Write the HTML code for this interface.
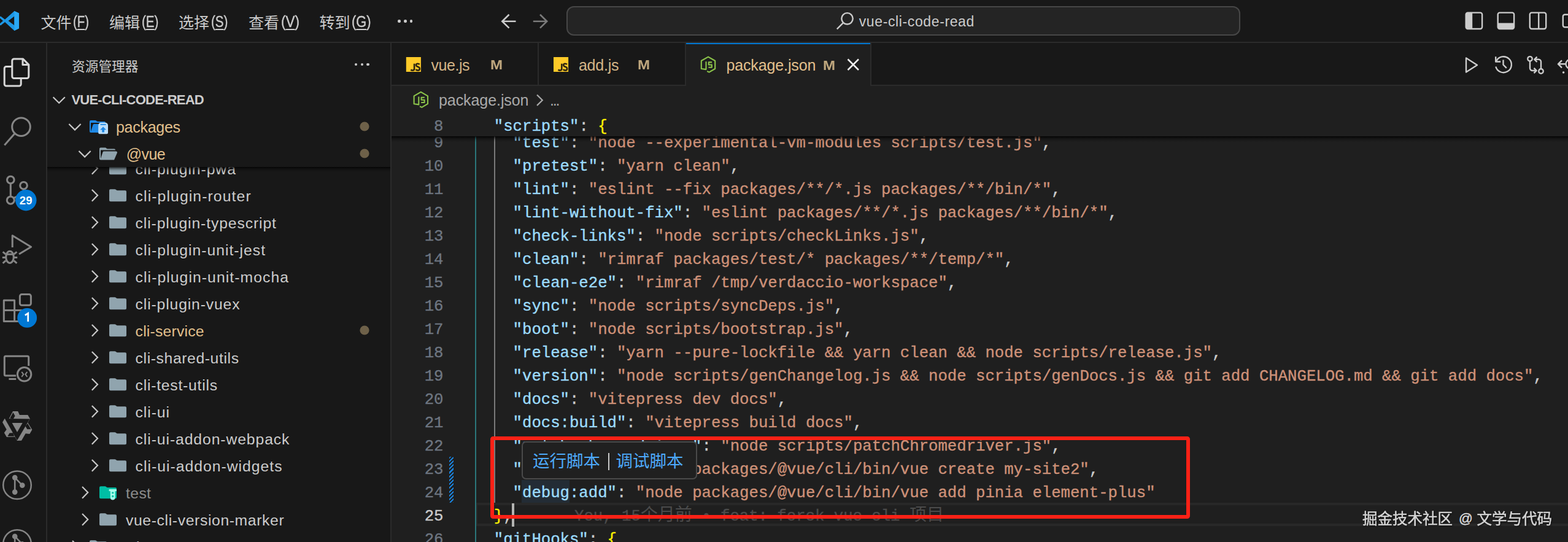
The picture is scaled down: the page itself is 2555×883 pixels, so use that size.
<!DOCTYPE html>
<html><head><meta charset="utf-8"><title>vue-cli-code-read</title>
<style>
html,body{margin:0;padding:0;background:#181818;}
body{width:2555px;height:883px;position:relative;overflow:hidden;font-family:"Liberation Sans",sans-serif;}
.r{position:absolute;}
.t{position:absolute;white-space:pre;font-family:"Liberation Sans",sans-serif;}
.m{position:absolute;white-space:pre;font-family:"Liberation Mono",monospace;-webkit-text-stroke:0.35px currentColor;}
svg{position:absolute;left:0;top:0;overflow:visible;}
.k{color:#9cdcfe}.s{color:#ce9178}.p{color:#cccccc}.y{color:#fff200}
</style></head><body>

<div class="r" style="left:0px;top:0px;width:2555px;height:68px;background:#181818;"></div>
<div class="r" style="left:0px;top:68px;width:2555px;height:2px;background:#2b2b2b;"></div>
<div class="r" style="left:0px;top:70px;width:75px;height:813px;background:#181818;"></div>
<div class="r" style="left:75px;top:70px;width:2px;height:813px;background:#2b2b2b;"></div>
<div class="r" style="left:77px;top:70px;width:559px;height:813px;background:#181818;"></div>
<div class="r" style="left:636px;top:70px;width:2px;height:813px;background:#2b2b2b;"></div>
<div class="r" style="left:638px;top:70px;width:1917px;height:68px;background:#181818;"></div>
<div class="r" style="left:638px;top:138px;width:1917px;height:2px;background:#2b2b2b;"></div>
<div class="r" style="left:638px;top:140px;width:1917px;height:743px;background:#1f1f1f;"></div>
<div class="r" style="left:876px;top:70px;width:2px;height:69px;background:#2b2b2b;"></div>
<div class="r" style="left:1116px;top:70px;width:2px;height:69px;background:#2b2b2b;"></div>
<div class="r" style="left:1118px;top:70px;width:300px;height:70px;background:#1f1f1f;"></div>
<div class="r" style="left:1118px;top:70px;width:300px;height:2px;background:#0078d4;"></div>
<div class="r" style="left:1418px;top:70px;width:2px;height:69px;background:#2b2b2b;"></div>
<div class="r" style="left:774px;top:819px;width:1791px;height:38px;background:transparent;box-sizing:border-box;border:4px solid #282828;"></div>
<div class="r" style="left:850px;top:782px;width:78px;height:37px;background:#232c35;"></div>
<div class="r" style="left:774.3px;top:221px;width:2px;height:662px;background:#2b777b;"></div>
<div class="r" style="left:804.6px;top:221px;width:2px;height:598px;background:#7a7a7a;"></div>
<div class="m" style="left:707.1px;top:214.87px;font-size:25.662px;line-height:38px;color:#6e7681;transform:scaleY(1.0);transform-origin:0 25.83px;">9</div>
<div class="m" style="left:774px;top:214.87px;font-size:25.662px;line-height:38px;color:#cccccc;transform:scaleY(1.0);transform-origin:0 25.83px;">    <span class="k">"test"</span><span class="p">: </span><span class="s">"node --experimental-vm-modules scripts/test.js"</span><span class="p">,</span></div>
<div class="m" style="left:691.7px;top:252.87px;font-size:25.662px;line-height:38px;color:#6e7681;transform:scaleY(1.0);transform-origin:0 25.83px;">10</div>
<div class="m" style="left:774px;top:252.87px;font-size:25.662px;line-height:38px;color:#cccccc;transform:scaleY(1.0);transform-origin:0 25.83px;">    <span class="k">"pretest"</span><span class="p">: </span><span class="s">"yarn clean"</span><span class="p">,</span></div>
<div class="m" style="left:691.7px;top:290.87px;font-size:25.662px;line-height:38px;color:#6e7681;transform:scaleY(1.0);transform-origin:0 25.83px;">11</div>
<div class="m" style="left:774px;top:290.87px;font-size:25.662px;line-height:38px;color:#cccccc;transform:scaleY(1.0);transform-origin:0 25.83px;">    <span class="k">"lint"</span><span class="p">: </span><span class="s">"eslint --fix packages/**/*.js packages/**/bin/*"</span><span class="p">,</span></div>
<div class="m" style="left:691.7px;top:328.87px;font-size:25.662px;line-height:38px;color:#6e7681;transform:scaleY(1.0);transform-origin:0 25.83px;">12</div>
<div class="m" style="left:774px;top:328.87px;font-size:25.662px;line-height:38px;color:#cccccc;transform:scaleY(1.0);transform-origin:0 25.83px;">    <span class="k">"lint-without-fix"</span><span class="p">: </span><span class="s">"eslint packages/**/*.js packages/**/bin/*"</span><span class="p">,</span></div>
<div class="m" style="left:691.7px;top:366.87px;font-size:25.662px;line-height:38px;color:#6e7681;transform:scaleY(1.0);transform-origin:0 25.83px;">13</div>
<div class="m" style="left:774px;top:366.87px;font-size:25.662px;line-height:38px;color:#cccccc;transform:scaleY(1.0);transform-origin:0 25.83px;">    <span class="k">"check-links"</span><span class="p">: </span><span class="s">"node scripts/checkLinks.js"</span><span class="p">,</span></div>
<div class="m" style="left:691.7px;top:404.87px;font-size:25.662px;line-height:38px;color:#6e7681;transform:scaleY(1.0);transform-origin:0 25.83px;">14</div>
<div class="m" style="left:774px;top:404.87px;font-size:25.662px;line-height:38px;color:#cccccc;transform:scaleY(1.0);transform-origin:0 25.83px;">    <span class="k">"clean"</span><span class="p">: </span><span class="s">"rimraf packages/test/* packages/**/temp/*"</span><span class="p">,</span></div>
<div class="m" style="left:691.7px;top:442.87px;font-size:25.662px;line-height:38px;color:#6e7681;transform:scaleY(1.0);transform-origin:0 25.83px;">15</div>
<div class="m" style="left:774px;top:442.87px;font-size:25.662px;line-height:38px;color:#cccccc;transform:scaleY(1.0);transform-origin:0 25.83px;">    <span class="k">"clean-e2e"</span><span class="p">: </span><span class="s">"rimraf /tmp/verdaccio-workspace"</span><span class="p">,</span></div>
<div class="m" style="left:691.7px;top:480.87px;font-size:25.662px;line-height:38px;color:#6e7681;transform:scaleY(1.0);transform-origin:0 25.83px;">16</div>
<div class="m" style="left:774px;top:480.87px;font-size:25.662px;line-height:38px;color:#cccccc;transform:scaleY(1.0);transform-origin:0 25.83px;">    <span class="k">"sync"</span><span class="p">: </span><span class="s">"node scripts/syncDeps.js"</span><span class="p">,</span></div>
<div class="m" style="left:691.7px;top:518.87px;font-size:25.662px;line-height:38px;color:#6e7681;transform:scaleY(1.0);transform-origin:0 25.83px;">17</div>
<div class="m" style="left:774px;top:518.87px;font-size:25.662px;line-height:38px;color:#cccccc;transform:scaleY(1.0);transform-origin:0 25.83px;">    <span class="k">"boot"</span><span class="p">: </span><span class="s">"node scripts/bootstrap.js"</span><span class="p">,</span></div>
<div class="m" style="left:691.7px;top:556.87px;font-size:25.662px;line-height:38px;color:#6e7681;transform:scaleY(1.0);transform-origin:0 25.83px;">18</div>
<div class="m" style="left:774px;top:556.87px;font-size:25.662px;line-height:38px;color:#cccccc;transform:scaleY(1.0);transform-origin:0 25.83px;">    <span class="k">"release"</span><span class="p">: </span><span class="s">"yarn --pure-lockfile &amp;&amp; yarn clean &amp;&amp; node scripts/release.js"</span><span class="p">,</span></div>
<div class="m" style="left:691.7px;top:594.87px;font-size:25.662px;line-height:38px;color:#6e7681;transform:scaleY(1.0);transform-origin:0 25.83px;">19</div>
<div class="m" style="left:774px;top:594.87px;font-size:25.662px;line-height:38px;color:#cccccc;transform:scaleY(1.0);transform-origin:0 25.83px;">    <span class="k">"version"</span><span class="p">: </span><span class="s">"node scripts/genChangelog.js &amp;&amp; node scripts/genDocs.js &amp;&amp; git add CHANGELOG.md &amp;&amp; git add docs"</span><span class="p">,</span></div>
<div class="m" style="left:691.7px;top:632.87px;font-size:25.662px;line-height:38px;color:#6e7681;transform:scaleY(1.0);transform-origin:0 25.83px;">20</div>
<div class="m" style="left:774px;top:632.87px;font-size:25.662px;line-height:38px;color:#cccccc;transform:scaleY(1.0);transform-origin:0 25.83px;">    <span class="k">"docs"</span><span class="p">: </span><span class="s">"vitepress dev docs"</span><span class="p">,</span></div>
<div class="m" style="left:691.7px;top:670.87px;font-size:25.662px;line-height:38px;color:#6e7681;transform:scaleY(1.0);transform-origin:0 25.83px;">21</div>
<div class="m" style="left:774px;top:670.87px;font-size:25.662px;line-height:38px;color:#cccccc;transform:scaleY(1.0);transform-origin:0 25.83px;">    <span class="k">"docs:build"</span><span class="p">: </span><span class="s">"vitepress build docs"</span><span class="p">,</span></div>
<div class="m" style="left:691.7px;top:708.87px;font-size:25.662px;line-height:38px;color:#6e7681;transform:scaleY(1.0);transform-origin:0 25.83px;">22</div>
<div class="m" style="left:774px;top:708.87px;font-size:25.662px;line-height:38px;color:#cccccc;transform:scaleY(1.0);transform-origin:0 25.83px;">    <span class="k">"patch-chromedriver"</span><span class="p">: </span><span class="s">"node scripts/patchChromedriver.js"</span><span class="p">,</span></div>
<div class="m" style="left:691.7px;top:746.87px;font-size:25.662px;line-height:38px;color:#6e7681;transform:scaleY(1.0);transform-origin:0 25.83px;">23</div>
<div class="m" style="left:774px;top:746.87px;font-size:25.662px;line-height:38px;color:#cccccc;transform:scaleY(1.0);transform-origin:0 25.83px;">    <span class="k">"debug:new"</span><span class="p">: </span><span class="s">"node packages/@vue/cli/bin/vue create my-site2"</span><span class="p">,</span></div>
<div class="m" style="left:691.7px;top:784.87px;font-size:25.662px;line-height:38px;color:#6e7681;transform:scaleY(1.0);transform-origin:0 25.83px;">24</div>
<div class="m" style="left:774px;top:784.87px;font-size:25.662px;line-height:38px;color:#cccccc;transform:scaleY(1.0);transform-origin:0 25.83px;">    <span class="k">"debug:add"</span><span class="p">: </span><span class="s">"node packages/@vue/cli/bin/vue add pinia element-plus"</span></div>
<div class="m" style="left:691.7px;top:822.87px;font-size:25.662px;line-height:38px;color:#cccccc;transform:scaleY(1.0);transform-origin:0 25.83px;">25</div>
<div class="m" style="left:774px;top:822.87px;font-size:25.662px;line-height:38px;color:#cccccc;transform:scaleY(1.0);transform-origin:0 25.83px;">  <span class="y">}</span><span class="p">,</span></div>
<div class="m" style="left:691.7px;top:860.87px;font-size:25.662px;line-height:38px;color:#6e7681;transform:scaleY(1.0);transform-origin:0 25.83px;">26</div>
<div class="m" style="left:774px;top:860.87px;font-size:25.662px;line-height:38px;color:#cccccc;transform:scaleY(1.0);transform-origin:0 25.83px;">  <span class="k">"gitHooks"</span><span class="p">: </span><span class="y">{</span></div>
<div class="m" style="left:936px;top:822.87px;font-size:25.662px;line-height:38px;color:#4b4b4b;transform:scaleY(1.0);transform-origin:0 25.83px;">You, 15</div>
<div class="m" style="left:1127.8px;top:822.87px;font-size:25.662px;line-height:38px;color:#4b4b4b;transform:scaleY(1.0);transform-origin:0 25.83px;"> • feat: forck vue cli </div>
<div class="r" style="left:731.8px;top:744px;width:6.8px;height:75px;background:repeating-linear-gradient(135deg,#1a7fd6 0 2.2px,#1f1f1f 2.2px 4.4px);border-radius:2px;"></div>
<div class="r" style="left:834.2px;top:820px;width:4px;height:37.5px;background:#b4b4b2;"></div>
<div class="r" style="left:850.3px;top:719.4px;width:285.4px;height:61.8px;background:#202020;box-sizing:border-box;border:2px solid #4a4a4a;border-radius:7px;"></div>
<div class="r" style="left:990.5px;top:738px;width:2px;height:28px;background:#c8c8c8;"></div>
<div class="r" style="left:638px;top:183px;width:1917px;height:38.7px;background:#1f1f1f;"></div>
<div class="r" style="left:638px;top:221.7px;width:1917px;height:10px;background:linear-gradient(rgba(0,0,0,0.85),rgba(0,0,0,0.5) 25%,rgba(0,0,0,0.15) 60%,rgba(0,0,0,0));"></div>
<div class="m" style="left:707.1px;top:187.77px;font-size:25.662px;line-height:38px;color:#6e7681;transform:scaleY(1.0);transform-origin:0 25.83px;">8</div>
<div class="m" style="left:774px;top:187.77px;font-size:25.662px;line-height:38px;color:#cccccc;transform:scaleY(1.0);transform-origin:0 25.83px;">  <span class="k">"scripts"</span><span class="p">: </span><span class="y">{</span></div>
<div class="r" style="left:638px;top:140px;width:1917px;height:43px;background:#1f1f1f;"></div>
<div class="t" style="left:702.40px;top:85.53px;font-size:25px;line-height:40px;color:#d4b587;letter-spacing:-0.440px;">vue.js</div>
<div class="t" style="left:799.30px;top:88.47px;font-size:22.3px;line-height:36px;color:#bfa77e;font-weight:700;transform:scaleX(1.08);transform-origin:0.00px 0;">M</div>
<div class="t" style="left:942.90px;top:85.53px;font-size:25px;line-height:40px;color:#d4b587;letter-spacing:-0.220px;">add.js</div>
<div class="t" style="left:1039.30px;top:88.47px;font-size:22.3px;line-height:36px;color:#bfa77e;font-weight:700;transform:scaleX(1.08);transform-origin:0.00px 0;">M</div>
<div class="t" style="left:1183.40px;top:85.73px;font-size:25px;line-height:40px;color:#e2c08d;letter-spacing:-0.118px;">package.json</div>
<div class="t" style="left:1341.20px;top:88.67px;font-size:22.3px;line-height:36px;color:#bfa77e;font-weight:700;transform:scaleX(1.08);transform-origin:0.00px 0;">M</div>
<div class="t" style="left:715.00px;top:142.83px;font-size:25px;line-height:40px;color:#a9a9a9;letter-spacing:-0.073px;">package.json</div>
<div class="t" style="left:896.00px;top:142.83px;font-size:25px;line-height:40px;color:#a9a9a9;letter-spacing:-2.250px;">...</div>
<div class="r" style="left:923.3px;top:9.8px;width:1097.4px;height:48.4px;background:#242424;box-sizing:border-box;border:2px solid #474747;border-radius:12px;"></div>
<div class="t" style="left:1399.70px;top:17.03px;font-size:23px;line-height:37px;color:#cccccc;letter-spacing:0.622px;">vue-cli-code-read</div>
<div class="t" style="left:119.20px;top:14.41px;font-size:26.5px;line-height:42px;color:#cccccc;transform:scaleX(0.769);transform-origin:0.00px 0;-webkit-text-stroke:0.4px currentColor;">(<span style="text-decoration:underline;text-decoration-thickness:1.7px;text-underline-offset:2.5px;">F</span>)</div>
<div class="t" style="left:230.70px;top:14.41px;font-size:26.5px;line-height:42px;color:#cccccc;transform:scaleX(0.776);transform-origin:0.00px 0;-webkit-text-stroke:0.4px currentColor;">(<span style="text-decoration:underline;text-decoration-thickness:1.7px;text-underline-offset:2.5px;">E</span>)</div>
<div class="t" style="left:343.70px;top:14.41px;font-size:26.5px;line-height:42px;color:#cccccc;transform:scaleX(0.776);transform-origin:0.00px 0;-webkit-text-stroke:0.4px currentColor;">(<span style="text-decoration:underline;text-decoration-thickness:1.7px;text-underline-offset:2.5px;">S</span>)</div>
<div class="t" style="left:457.70px;top:14.41px;font-size:26.5px;line-height:42px;color:#cccccc;transform:scaleX(0.850);transform-origin:0.00px 0;-webkit-text-stroke:0.4px currentColor;">(<span style="text-decoration:underline;text-decoration-thickness:1.7px;text-underline-offset:2.5px;">V</span>)</div>
<div class="t" style="left:573.20px;top:14.41px;font-size:26.5px;line-height:42px;color:#cccccc;transform:scaleX(0.821);transform-origin:0.00px 0;-webkit-text-stroke:0.4px currentColor;">(<span style="text-decoration:underline;text-decoration-thickness:1.7px;text-underline-offset:2.5px;">G</span>)</div>
<div class="r" style="left:648.3px;top:32.2px;width:4.4px;height:4.4px;border-radius:50%;background:#cccccc"></div>
<div class="r" style="left:658.2px;top:32.2px;width:4.4px;height:4.4px;border-radius:50%;background:#cccccc"></div>
<div class="r" style="left:668.1px;top:32.2px;width:4.4px;height:4.4px;border-radius:50%;background:#cccccc"></div>
<div class="t" style="left:220.60px;top:256.04px;font-size:24.7px;line-height:40px;color:#cccccc;letter-spacing:0.949px;">cli-plugin-pwa</div>
<div class="t" style="left:220.60px;top:300.04px;font-size:24.7px;line-height:40px;color:#cccccc;letter-spacing:1.117px;">cli-plugin-router</div>
<div class="t" style="left:220.60px;top:344.04px;font-size:24.7px;line-height:40px;color:#cccccc;letter-spacing:0.903px;">cli-plugin-typescript</div>
<div class="t" style="left:220.60px;top:388.04px;font-size:24.7px;line-height:40px;color:#cccccc;letter-spacing:1.018px;">cli-plugin-unit-jest</div>
<div class="t" style="left:220.60px;top:432.04px;font-size:24.7px;line-height:40px;color:#cccccc;letter-spacing:1.078px;">cli-plugin-unit-mocha</div>
<div class="t" style="left:220.60px;top:476.04px;font-size:24.7px;line-height:40px;color:#cccccc;letter-spacing:0.866px;">cli-plugin-vuex</div>
<div class="t" style="left:220.60px;top:520.04px;font-size:24.7px;line-height:40px;color:#e2c08d;letter-spacing:0.223px;">cli-service</div>
<div class="t" style="left:220.60px;top:564.04px;font-size:24.7px;line-height:40px;color:#cccccc;letter-spacing:0.616px;">cli-shared-utils</div>
<div class="t" style="left:220.60px;top:608.04px;font-size:24.7px;line-height:40px;color:#cccccc;letter-spacing:0.769px;">cli-test-utils</div>
<div class="t" style="left:220.60px;top:652.04px;font-size:24.7px;line-height:40px;color:#cccccc;letter-spacing:0.923px;">cli-ui</div>
<div class="t" style="left:220.60px;top:696.04px;font-size:24.7px;line-height:40px;color:#cccccc;letter-spacing:0.923px;">cli-ui-addon-webpack</div>
<div class="t" style="left:220.60px;top:740.04px;font-size:24.7px;line-height:40px;color:#cccccc;letter-spacing:1.019px;">cli-ui-addon-widgets</div>
<div class="t" style="left:205.00px;top:784.04px;font-size:24.7px;line-height:40px;color:#8c8c8c;letter-spacing:0.395px;">test</div>
<div class="t" style="left:205.00px;top:828.04px;font-size:24.7px;line-height:40px;color:#cccccc;letter-spacing:0.641px;">vue-cli-version-marker</div>
<div class="t" style="left:189.00px;top:872.04px;font-size:24.7px;line-height:40px;color:#cccccc;">scripts</div>
<svg width="2555" height="883" viewBox="0 0 2555 883">
<path d="M149.8 264.9l9.2 9.4-9.2 9.4" fill="none" stroke="#c8c8c8" stroke-width="2.2"/>
<path transform="translate(176 258.3)" d="M13.844 7.536l-1.288-1.072A2 2 0 0 0 11.276 6H4a2 2 0 0 0-2 2v16a2 2 0 0 0 2 2h24a2 2 0 0 0 2-2V10a2 2 0 0 0-2-2H15.124a2 2 0 0 1-1.28-.464Z" fill="#90a4ae"/>
<path d="M149.8 308.9l9.2 9.4-9.2 9.4" fill="none" stroke="#c8c8c8" stroke-width="2.2"/>
<path transform="translate(176 302.3)" d="M13.844 7.536l-1.288-1.072A2 2 0 0 0 11.276 6H4a2 2 0 0 0-2 2v16a2 2 0 0 0 2 2h24a2 2 0 0 0 2-2V10a2 2 0 0 0-2-2H15.124a2 2 0 0 1-1.28-.464Z" fill="#90a4ae"/>
<path d="M149.8 352.9l9.2 9.4-9.2 9.4" fill="none" stroke="#c8c8c8" stroke-width="2.2"/>
<path transform="translate(176 346.3)" d="M13.844 7.536l-1.288-1.072A2 2 0 0 0 11.276 6H4a2 2 0 0 0-2 2v16a2 2 0 0 0 2 2h24a2 2 0 0 0 2-2V10a2 2 0 0 0-2-2H15.124a2 2 0 0 1-1.28-.464Z" fill="#90a4ae"/>
<path d="M149.8 396.9l9.2 9.4-9.2 9.4" fill="none" stroke="#c8c8c8" stroke-width="2.2"/>
<path transform="translate(176 390.3)" d="M13.844 7.536l-1.288-1.072A2 2 0 0 0 11.276 6H4a2 2 0 0 0-2 2v16a2 2 0 0 0 2 2h24a2 2 0 0 0 2-2V10a2 2 0 0 0-2-2H15.124a2 2 0 0 1-1.28-.464Z" fill="#90a4ae"/>
<path d="M149.8 440.9l9.2 9.4-9.2 9.4" fill="none" stroke="#c8c8c8" stroke-width="2.2"/>
<path transform="translate(176 434.3)" d="M13.844 7.536l-1.288-1.072A2 2 0 0 0 11.276 6H4a2 2 0 0 0-2 2v16a2 2 0 0 0 2 2h24a2 2 0 0 0 2-2V10a2 2 0 0 0-2-2H15.124a2 2 0 0 1-1.28-.464Z" fill="#90a4ae"/>
<path d="M149.8 484.9l9.2 9.4-9.2 9.4" fill="none" stroke="#c8c8c8" stroke-width="2.2"/>
<path transform="translate(176 478.3)" d="M13.844 7.536l-1.288-1.072A2 2 0 0 0 11.276 6H4a2 2 0 0 0-2 2v16a2 2 0 0 0 2 2h24a2 2 0 0 0 2-2V10a2 2 0 0 0-2-2H15.124a2 2 0 0 1-1.28-.464Z" fill="#90a4ae"/>
<path d="M149.8 528.9l9.2 9.4-9.2 9.4" fill="none" stroke="#c8c8c8" stroke-width="2.2"/>
<path transform="translate(176 522.3)" d="M13.844 7.536l-1.288-1.072A2 2 0 0 0 11.276 6H4a2 2 0 0 0-2 2v16a2 2 0 0 0 2 2h24a2 2 0 0 0 2-2V10a2 2 0 0 0-2-2H15.124a2 2 0 0 1-1.28-.464Z" fill="#90a4ae"/>
<path d="M149.8 572.9l9.2 9.4-9.2 9.4" fill="none" stroke="#c8c8c8" stroke-width="2.2"/>
<path transform="translate(176 566.3)" d="M13.844 7.536l-1.288-1.072A2 2 0 0 0 11.276 6H4a2 2 0 0 0-2 2v16a2 2 0 0 0 2 2h24a2 2 0 0 0 2-2V10a2 2 0 0 0-2-2H15.124a2 2 0 0 1-1.28-.464Z" fill="#90a4ae"/>
<path d="M149.8 616.9l9.2 9.4-9.2 9.4" fill="none" stroke="#c8c8c8" stroke-width="2.2"/>
<path transform="translate(176 610.3)" d="M13.844 7.536l-1.288-1.072A2 2 0 0 0 11.276 6H4a2 2 0 0 0-2 2v16a2 2 0 0 0 2 2h24a2 2 0 0 0 2-2V10a2 2 0 0 0-2-2H15.124a2 2 0 0 1-1.28-.464Z" fill="#90a4ae"/>
<path d="M149.8 660.9l9.2 9.4-9.2 9.4" fill="none" stroke="#c8c8c8" stroke-width="2.2"/>
<path transform="translate(176 654.3)" d="M13.844 7.536l-1.288-1.072A2 2 0 0 0 11.276 6H4a2 2 0 0 0-2 2v16a2 2 0 0 0 2 2h24a2 2 0 0 0 2-2V10a2 2 0 0 0-2-2H15.124a2 2 0 0 1-1.28-.464Z" fill="#90a4ae"/>
<path d="M149.8 704.9l9.2 9.4-9.2 9.4" fill="none" stroke="#c8c8c8" stroke-width="2.2"/>
<path transform="translate(176 698.3)" d="M13.844 7.536l-1.288-1.072A2 2 0 0 0 11.276 6H4a2 2 0 0 0-2 2v16a2 2 0 0 0 2 2h24a2 2 0 0 0 2-2V10a2 2 0 0 0-2-2H15.124a2 2 0 0 1-1.28-.464Z" fill="#90a4ae"/>
<path d="M149.8 748.9l9.2 9.4-9.2 9.4" fill="none" stroke="#c8c8c8" stroke-width="2.2"/>
<path transform="translate(176 742.3)" d="M13.844 7.536l-1.288-1.072A2 2 0 0 0 11.276 6H4a2 2 0 0 0-2 2v16a2 2 0 0 0 2 2h24a2 2 0 0 0 2-2V10a2 2 0 0 0-2-2H15.124a2 2 0 0 1-1.28-.464Z" fill="#90a4ae"/>
<path d="M134.0 792.9l9.2 9.4-9.2 9.4" fill="none" stroke="#c8c8c8" stroke-width="2.2"/>
<path transform="translate(160 786.3)" d="M13.844 7.536l-1.288-1.072A2 2 0 0 0 11.276 6H4a2 2 0 0 0-2 2v16a2 2 0 0 0 2 2h24a2 2 0 0 0 2-2V10a2 2 0 0 0-2-2H15.124a2 2 0 0 1-1.28-.464Z" fill="#00bfa5"/>
<g transform="translate(176.5 797)"><rect x="1" y="0" width="12.5" height="3.2" rx="1" fill="#a7ffeb"/><path d="M3.4 2.5h7.6v11.3a3.8 3.8 0 0 1-7.6 0z" fill="#a7ffeb"/><rect x="5.6" y="4.6" width="3.2" height="2.6" fill="#00bfa5"/><circle cx="7.2" cy="11.5" r="1.7" fill="#00bfa5"/></g>
<path d="M134.0 836.9l9.2 9.4-9.2 9.4" fill="none" stroke="#c8c8c8" stroke-width="2.2"/>
<path transform="translate(160 830.3)" d="M13.844 7.536l-1.288-1.072A2 2 0 0 0 11.276 6H4a2 2 0 0 0-2 2v16a2 2 0 0 0 2 2h24a2 2 0 0 0 2-2V10a2 2 0 0 0-2-2H15.124a2 2 0 0 1-1.28-.464Z" fill="#90a4ae"/>
<path d="M118.0 880.9l9.2 9.4-9.2 9.4" fill="none" stroke="#c8c8c8" stroke-width="2.2"/>
<path transform="translate(144 874.3)" d="M13.844 7.536l-1.288-1.072A2 2 0 0 0 11.276 6H4a2 2 0 0 0-2 2v16a2 2 0 0 0 2 2h24a2 2 0 0 0 2-2V10a2 2 0 0 0-2-2H15.124a2 2 0 0 1-1.28-.464Z" fill="#90a4ae"/>
<circle cx="594" cy="538" r="7.6" fill="#6e6149"/>
<text x="1043.8" y="848" font-size="28" fill="#4b4b4b" font-family="&quot;Liberation Mono&quot;, &quot;Noto Sans CJK SC&quot;, monospace">个月前</text>
<text x="1482" y="848" font-size="28" fill="#4b4b4b" font-family="&quot;Liberation Mono&quot;, &quot;Noto Sans CJK SC&quot;, monospace">项目</text>
<text x="868" y="761" font-size="27.5" fill="#4daafc" font-family="&quot;Liberation Sans&quot;, &quot;Noto Sans CJK SC&quot;, sans-serif">运行脚本</text>
<text x="1003.5" y="761" font-size="27.5" fill="#4daafc" font-family="&quot;Liberation Sans&quot;, &quot;Noto Sans CJK SC&quot;, sans-serif">调试脚本</text>
<text x="66.5" y="45.5" font-size="25" fill="#cccccc" font-family="&quot;Liberation Sans&quot;, &quot;Noto Sans CJK SC&quot;, sans-serif">文件</text>
<text x="178" y="45.5" font-size="25" fill="#cccccc" font-family="&quot;Liberation Sans&quot;, &quot;Noto Sans CJK SC&quot;, sans-serif">编辑</text>
<text x="291" y="45.5" font-size="25" fill="#cccccc" font-family="&quot;Liberation Sans&quot;, &quot;Noto Sans CJK SC&quot;, sans-serif">选择</text>
<text x="405" y="45.5" font-size="25" fill="#cccccc" font-family="&quot;Liberation Sans&quot;, &quot;Noto Sans CJK SC&quot;, sans-serif">查看</text>
<text x="520.5" y="45.5" font-size="25" fill="#cccccc" font-family="&quot;Liberation Sans&quot;, &quot;Noto Sans CJK SC&quot;, sans-serif">转到</text>
</svg>
<div class="r" style="left:77px;top:140px;width:559px;height:132px;background:#181818;"></div>
<div class="r" style="left:77px;top:272px;width:559px;height:9px;background:linear-gradient(rgba(0,0,0,0.8),rgba(0,0,0,0.45) 25%,rgba(0,0,0,0.12) 60%,rgba(0,0,0,0));"></div>
<div class="r" style="left:77px;top:70px;width:559px;height:72px;background:#181818;"></div>
<div class="r" style="left:577.6px;top:102.8px;width:4.4px;height:4.4px;border-radius:50%;background:#cccccc"></div>
<div class="r" style="left:587.5px;top:102.8px;width:4.4px;height:4.4px;border-radius:50%;background:#cccccc"></div>
<div class="r" style="left:597.4px;top:102.8px;width:4.4px;height:4.4px;border-radius:50%;background:#cccccc"></div>
<div class="t" style="left:116.40px;top:145.37px;font-size:22px;line-height:35px;color:#cccccc;letter-spacing:-0.765px;font-weight:700;">VUE-CLI-CODE-READ</div>
<div class="t" style="left:189.00px;top:187.33px;font-size:25px;line-height:40px;color:#e2c08d;letter-spacing:-0.286px;">packages</div>
<div class="t" style="left:205.80px;top:231.33px;font-size:25px;line-height:40px;color:#e2c08d;letter-spacing:-0.633px;">@vue</div>
<svg width="2555" height="883" viewBox="0 0 2555 883">
<path d="M86.6 158.2l9.6 9.6 9.6-9.6" fill="none" stroke="#c8c8c8" stroke-width="2.2"/>
<path d="M112.4 202.0l9.6 9.6 9.6-9.6" fill="none" stroke="#c8c8c8" stroke-width="2.2"/>
<path d="M128.5 246.0l9.6 9.6 9.6-9.6" fill="none" stroke="#c8c8c8" stroke-width="2.2"/>
<path transform="translate(144 190)" d="M28.967 12H9.442a2 2 0 0 0-1.898 1.368L4 24V10h24a2 2 0 0 0-2-2H15.124a2 2 0 0 1-1.28-.464l-1.288-1.072A2 2 0 0 0 11.276 6H4a2 2 0 0 0-2 2v16a2 2 0 0 0 2 2h22l4.805-11.212A2 2 0 0 0 28.967 12Z" fill="#1e88e5"/>
<g transform="translate(160.200 199.800)"><path d="M0 4.500a4.500 4.500 0 0 1 4.500-4.500h6.800a4.500 4.500 0 0 1 4.500 4.500v11.900a2 2 0 0 1-2 2h-11.800a2 2 0 0 1-2-2z" fill="#bbdefb"/><rect x="3.200" y="2.300" width="9.400" height="1.700" rx="0.800" fill="#1e88e5"/><path d="M7.900 6.800l5 5h-3.100v3.900h-3.800v-3.900h-3.100z" fill="#1e88e5"/></g>
<path transform="translate(160 234.4)" d="M28.967 12H9.442a2 2 0 0 0-1.898 1.368L4 24V10h24a2 2 0 0 0-2-2H15.124a2 2 0 0 1-1.28-.464l-1.288-1.072A2 2 0 0 0 11.276 6H4a2 2 0 0 0-2 2v16a2 2 0 0 0 2 2h22l4.805-11.212A2 2 0 0 0 28.967 12Z" fill="#90a4ae"/>
<circle cx="594" cy="206" r="7.6" fill="#6e6149"/>
<circle cx="594" cy="250" r="7.6" fill="#6e6149"/>
<g fill="none" stroke="#d7d7d7" stroke-width="3" stroke-linejoin="round"><path d="M19.800 124.500V98.900a3 3 0 0 1 3-3h14.500l9.500 9.500V124.500a3 3 0 0 1-3 3H22.800a3 3 0 0 1-3-3z"/><path d="M37 96.200V105.600h9.500"/><path d="M19.800 108.500H10.200a3 3 0 0 0-3 3V137a3 3 0 0 0 3 3h21a3 3 0 0 0 3-3v-9.500"/></g>
<g fill="none" stroke="#868686" stroke-width="3"><circle cx="34.5" cy="206.7" r="14.8"/><path d="M24 217.500L7.300 236.600"/></g>
<g fill="none" stroke="#868686" stroke-width="3.1"><circle cx="17.300" cy="293" r="5.800"/><circle cx="17.300" cy="326.200" r="6"/><circle cx="38.500" cy="302.300" r="5.800"/><path d="M17.300 299v21"/><path d="M38.500 308.300c0 8-8 10.500-15.500 14"/></g>
<circle cx="42.300" cy="326.200" r="17.200" fill="#0078d4"/>
<g fill="none" stroke="#868686" stroke-width="3" stroke-linejoin="round"><path d="M20.200 403V383.800L50.600 402.300 31 414"/><ellipse cx="16" cy="418.800" rx="6.300" ry="9.600"/><path d="M10.200 414.300H21.800M3.800 419.600H9.700M22.300 419.600H28.200M4.600 410.400l4.600 3.600M27.400 410.400l-4.600 3.600M4.600 428.800l4.800-4.200M27.400 428.800l-4.800-4.200"/></g>
<g fill="none" stroke="#868686" stroke-width="3" stroke-linejoin="round"><path d="M6.300 489.300H23.600V523.400H6.300zM6.300 505.600H42V523.400H23.600M42 505.600V523.400"/><rect x="32.400" y="479.600" width="18" height="17.600" rx="3"/></g>
<circle cx="44.200" cy="517.900" r="15.900" fill="#0078d4"/>
<path d="M40.800 513.600L45.700 510.400V524" fill="none" stroke="#ffffff" stroke-width="2.700"/>
<g fill="none" stroke="#868686" stroke-width="3"><path d="M26 612H9.300a2 2 0 0 1-2-2V582.300a2 2 0 0 1 2-2H44.700a2 2 0 0 1 2 2V596"/><path d="M14.400 617.500h11.800"/><circle cx="39.600" cy="609.800" r="11.200"/><path d="M35.300 605.800l3 4-3 4M44.300 605.800l-3 4 3 4" stroke-width="2"/></g>
<polygon points="21.0,670.0 29.2,670.0 31.9,676.1 45.3,676.1 48.9,682.2 45.3,688.4 52.4,699.9 48.3,707.0 41.7,706.2 35.0,717.8 27.900,717.900 24.3,711.7 10.9,712.1 6.8,705.0 10.7,699.7 4.0,688.1 7.5,681.9 14.7,681.9" fill="#868686"/>
<polygon points="48.5,682.4 27.9,717.5 7.9,682.1" fill="#181818"/>
<polygon points="36.7,689.1 28.0,703.9 19.6,689.0" fill="#868686"/>
<polygon points="16.1,681.4 21.4,672.0 24.5,677.4 21.7,682.4" fill="#181818"/>
<polygon points="45.0,689.9 50.5,699.2 44.3,699.2 41.3,694.3" fill="#181818"/>
<polygon points="23.2,710.7 12.4,710.8 15.5,705.4 21.3,705.3" fill="#181818"/>
<circle cx="28" cy="790.2" r="22.800" fill="none" stroke="#868686" stroke-width="2.500"/><g fill="#868686"><circle cx="24.200" cy="778.1" r="4.300"/><circle cx="24.200" cy="801.6" r="4.300"/><circle cx="36.300" cy="790.6" r="4.300"/></g><path d="M24.200 778.1V801.6M24.200 778.1L36.300 790.6" fill="none" stroke="#868686" stroke-width="2.600"/>
<circle cx="28" cy="886" r="22.800" fill="none" stroke="#868686" stroke-width="2.500"/><g fill="#868686"><circle cx="24.200" cy="873.9" r="4.300"/><circle cx="24.200" cy="897.4" r="4.300"/><circle cx="36.300" cy="886.4" r="4.300"/></g><path d="M24.200 873.9V897.4M24.200 873.9L36.300 886.400" fill="none" stroke="#868686" stroke-width="2.600"/>
<text x="117" y="115.500" font-size="21.700" fill="#cccccc" font-family="&quot;Liberation Sans&quot;, &quot;Noto Sans CJK SC&quot;, sans-serif">资源管理器</text>
</svg>
<div class="t" style="left:31.80px;top:311.79px;font-size:18.5px;line-height:30px;color:#ffffff;letter-spacing:0.228px;font-weight:700;">29</div>
<svg width="2555" height="883" viewBox="0 0 2555 883">
<g transform="translate(-2.4 16.5) scale(0.348)"><path d="M74 4 L96 14.500 V85.500 L74 96 L30 56 L10 71.500 L2 67 L21 50 L2 33 L10 28.500 L30 44 Z M74 29 L46 50 L74 71 Z" fill="#1d98e6" fill-rule="evenodd"/><path d="M74 4 L96 14.500 V85.500 L74 96 Z" fill="#2aa8f4"/></g>
<g fill="none" stroke="#cccccc" stroke-width="2.6"><path d="M840.500 34.700H818M829.500 23.800L818.300 34.700l11.200 10.900"/></g>
<g fill="none" stroke="#7a7a7a" stroke-width="2.6"><path d="M868.800 34.700H891.500M880 23.800l11.200 10.900L880 45.600"/></g>
<g fill="none" stroke="#cccccc" stroke-width="2.4"><circle cx="1380.500" cy="30.300" r="9.200"/><path d="M1374 37.200L1363.800 47.300"/></g>
<rect x="2388.7" y="20.6" width="26.400" height="26.400" rx="3" fill="none" stroke="#cccccc" stroke-width="2.400"/>
<path d="M2388.7 22.6a2 2 0 0 1 2-2h8.500v26.400h-8.500a2 2 0 0 1-2-2z" fill="#cccccc"/>
<rect x="2440.7" y="20.6" width="26.400" height="26.400" rx="3" fill="none" stroke="#cccccc" stroke-width="2.400"/>
<path d="M2440.7 37.6h26.400v7.400a2 2 0 0 1-2 2h-22.400a2 2 0 0 1-2-2z" fill="#cccccc"/>
<rect x="2492.7999999999997" y="20.6" width="26.400" height="26.400" rx="3" fill="none" stroke="#cccccc" stroke-width="2.400"/>
<path d="M2507.2 20.6v26.400" stroke="#cccccc" stroke-width="2.400"/>
<rect x="2546.800" y="23.800" width="30" height="20.400" rx="3" fill="none" stroke="#cccccc" stroke-width="2.400"/>
<rect x="661.8" y="93" width="24.100" height="24" fill="#ffca28"/>
<path d="M675.0999999999999 103.8v8.200q0 2.700-2.900 2.700-1.700 0-2.800-1.200" fill="none" stroke="#2e2612" stroke-width="2.600"/>
<path d="M683.8 104.900q-1.300-1.200-3.200-1.200-2.600 0-2.600 2.400 0 1.800 2.800 2.700 3.100 1 3.100 3.100 0 2.700-3 2.700-2.200 0-3.500-1.500" fill="none" stroke="#2e2612" stroke-width="2.600"/>
<rect x="902" y="93" width="24.100" height="24" fill="#ffca28"/>
<path d="M915.3 103.8v8.200q0 2.700-2.900 2.700-1.700 0-2.800-1.200" fill="none" stroke="#2e2612" stroke-width="2.600"/>
<path d="M924 104.900q-1.300-1.200-3.200-1.200-2.600 0-2.600 2.400 0 1.800 2.800 2.700 3.100 1 3.100 3.100 0 2.700-3 2.700-2.200 0-3.500-1.500" fill="none" stroke="#2e2612" stroke-width="2.600"/>
<g fill="none" stroke="#8bc34a" stroke-width="2.100" stroke-linejoin="round"><path d="M1150.500 100.300V113.100L1142.8 112.0L1142.8 99.0L1154.0 92.6L1165.2 99.0L1165.2 112.0L1155.5 117.600L1152.2 116.0"/><path d="M1160.0 101.4h-5.200v4.100h5v4.200h-5.400"/></g>
<g fill="none" stroke="#8bc34a" stroke-width="2.100" stroke-linejoin="round"><path d="M682.3 157.600V170.400L674.6 169.2L674.6 156.4L685.8 149.900L697.0 156.4L697.0 169.2L687.3 174.900L684.0 173.3"/><path d="M691.8 158.7h-5.200v4.100h5v4.200h-5.400"/></g>
<path d="M1381.500 96.500L1399 114M1399 96.500L1381.500 114" stroke="#f0f0f0" stroke-width="2.500" fill="none"/>
<path d="M875 154.500l8.800 8.700-8.800 8.700" fill="none" stroke="#a9a9a9" stroke-width="2.200"/>
<g fill="none" stroke="#cccccc" stroke-width="2.400" stroke-linejoin="round"><path d="M2389 94.500L2407 106 2389 117.500z"/><path d="M2438.200 99.500A13 13 0 1 1 2437.300 108.500"/><path d="M2437.200 92.300V100.500H2445.200"/><path d="M2449.500 97.500V105.500L2454.800 110.800"/><circle cx="2493" cy="95.800" r="3.700"/><circle cx="2511" cy="116" r="3.700"/><path d="M2493 99.500V111a4 4 0 0 0 4 4H2503M2499.500 110.800L2503.700 115l-4.200 4.200"/><path d="M2511 112.300V100.800a4 4 0 0 0-4-4H2501M2504.500 92.600L2500.300 96.800l4.200 4.200"/><path d="M2551.500 104.300H2539M2545 98.300L2539 104.300l6 6"/><circle cx="2559" cy="104.300" r="7.500"/></g>
<circle cx="2547.600" cy="118" r="1.800" fill="#cccccc"/>
</svg>
<div class="r" style="left:799.3px;top:710.5px;width:1140px;height:134.5px;background:transparent;box-sizing:border-box;border:6.600px solid #fc2116;border-radius:4.500px;"></div>
<svg width="2555" height="883" viewBox="0 0 2555 883" style="filter:drop-shadow(1px 1px 1px rgba(0,0,0,0.6))"><text x="2220" y="853.5" font-size="24.5" fill="#d6d6d6" stroke="#d6d6d6" stroke-width="0.5" font-family="&quot;Liberation Sans&quot;, &quot;Noto Sans CJK SC&quot;, sans-serif">掘金技术社区</text><text x="2406.5" y="853.5" font-size="24.5" fill="#d6d6d6" stroke="#d6d6d6" stroke-width="0.5" font-family="&quot;Liberation Sans&quot;, &quot;Noto Sans CJK SC&quot;, sans-serif">文学与代码</text></svg>
<div class="t" style="left:2377.00px;top:827.20px;font-size:22.5px;line-height:36px;color:#d6d6d6;text-shadow:1px 1px 1px rgba(0,0,0,0.6);-webkit-text-stroke:0.5px currentColor;">@</div>
</body></html>
